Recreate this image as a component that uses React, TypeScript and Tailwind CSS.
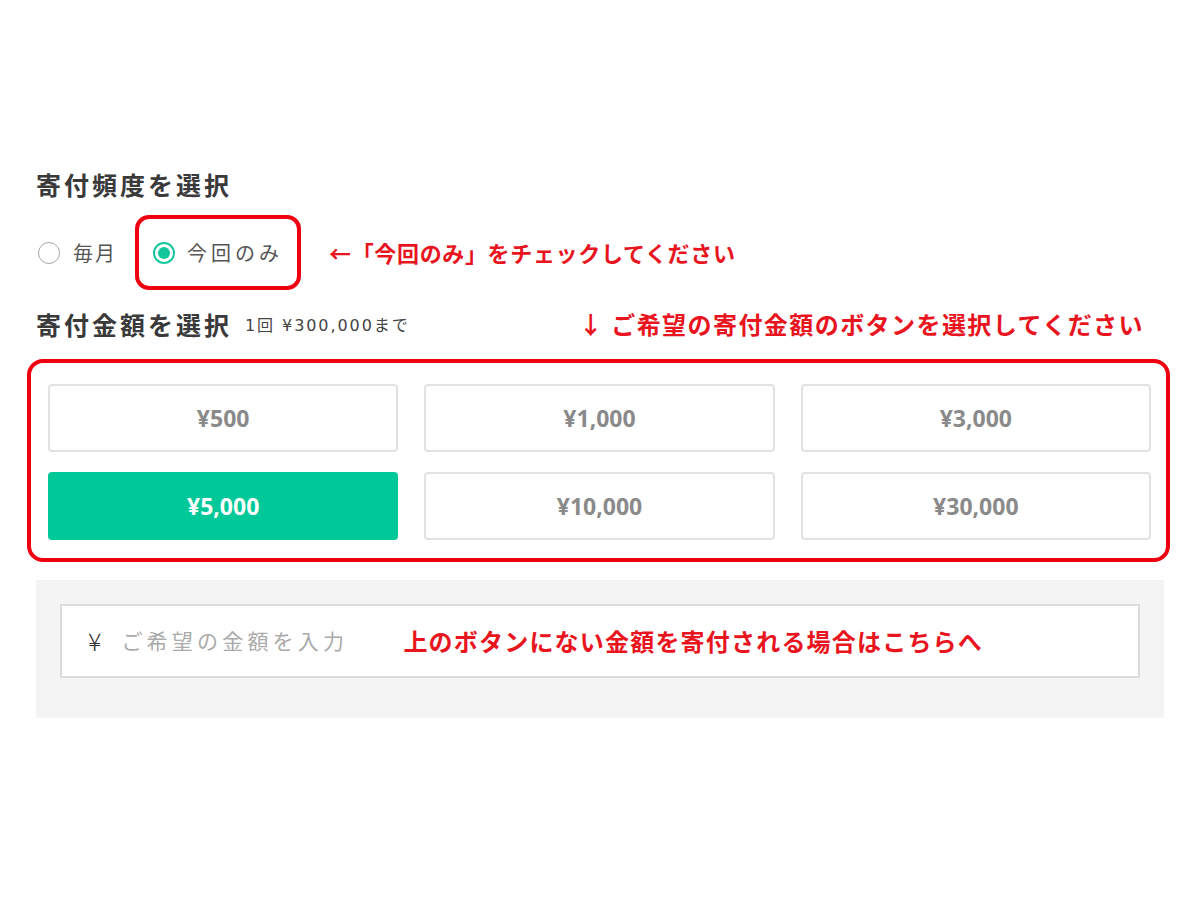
import React from "react";

const AMOUNTS = ["¥500", "¥1,000", "¥3,000", "¥5,000", "¥10,000", "¥30,000"];

function Radio({ checked }: { checked?: boolean }) {
  if (checked) {
    return (
      <span className="flex h-[22px] w-[22px] items-center justify-center rounded-full border-[2px] border-[#12c79b] bg-white">
        <span className="h-[12px] w-[12px] rounded-full bg-[#12c79b]" />
      </span>
    );
  }
  return <span className="block h-[22px] w-[22px] rounded-full border-[1.5px] border-[#a8a8a8] bg-white" />;
}

export default function App() {
  const selected = "¥5,000";

  return (
    <div className="min-h-[902px] bg-white font-['Noto_Sans_CJK_JP',sans-serif] text-[#3a3a3a]">
      <div className="px-[36px] pt-[167px]">
        {/* 頻度 */}
        <h2 className="text-[25px] font-bold leading-[34px] tracking-[0.12em]">寄付頻度を選択</h2>

        <div className="mt-[14px] flex items-center">
          <label className="ml-[2px] flex items-center gap-[13px] text-[20px] text-[#555]">
            <Radio />
            <span className="tracking-[0.1em]">毎月</span>
          </label>
          <div className="ml-[18px] flex h-[75px] w-[166px] items-center gap-[12px] rounded-[14px] border-[4px] border-[#ee0010] pl-[14px]">
            <Radio checked />
            <span className="text-[20px] tracking-[0.2em] text-[#555]">今回のみ</span>
          </div>
          <p className="ml-[28px] text-[22px] font-bold tracking-[0.03em] text-[#e8141e]">
            ←「今回のみ」をチェックしてください
          </p>
        </div>

        {/* 金額 */}
        <div className="mt-[16px] flex items-center">
          <h2 className="text-[25px] font-bold leading-[34px] tracking-[0.12em]">寄付金額を選択</h2>
          <span className="ml-[13px] mt-[4px] font-['DejaVu_Sans','Noto_Sans_CJK_JP',sans-serif] text-[16px] tracking-[0.12em] text-[#444]">
            1回 ¥300,000まで
          </span>
          <p className="ml-auto mr-[20px] text-[24px] font-bold tracking-[0.06em] text-[#e8141e]">
            ↓ ご希望の寄付金額のボタンを選択してください
          </p>
        </div>

        <div className="-ml-[9px] -mr-[6px] mt-[17px] rounded-[16px] border-[4px] border-[#ee0010] pb-[18px] pl-[17px] pr-[15px] pt-[21px]">
          <div className="grid grid-cols-3 gap-x-[26px] gap-y-[20px]">
            {AMOUNTS.map((a) =>
              a === selected ? (
                <button
                  key={a}
                  className="flex h-[68px] items-center justify-center rounded-[4px] bg-[#00c898] font-['Open_Sans',sans-serif] text-[23px] font-bold text-white"
                >
                  {a}
                </button>
              ) : (
                <button
                  key={a}
                  className="flex h-[68px] items-center justify-center rounded-[4px] border-[2px] border-[#e2e2e2] bg-white font-['Open_Sans',sans-serif] text-[23px] font-bold text-[#8a8a8a]"
                >
                  {a}
                </button>
              )
            )}
          </div>
        </div>

        <div className="mt-[18px] bg-[#f4f4f4] px-[24px] pb-[40px] pt-[24px]">
          <div className="flex h-[74px] items-center border-[2px] border-[#dcdcdc] bg-white pl-[26px]">
            <span className="text-[25px] font-light text-[#333]">¥</span>
            <input
              className="ml-[20px] w-[282px] bg-transparent text-[21px] tracking-[0.2em] outline-none placeholder:text-[#aaa]"
              placeholder="ご希望の金額を入力"
            />
            <span className="text-[24px] font-bold tracking-[0.05em] text-[#e8141e]">
              上のボタンにない金額を寄付される場合はこちらへ
            </span>
          </div>
        </div>
      </div>
    </div>
  );
}
